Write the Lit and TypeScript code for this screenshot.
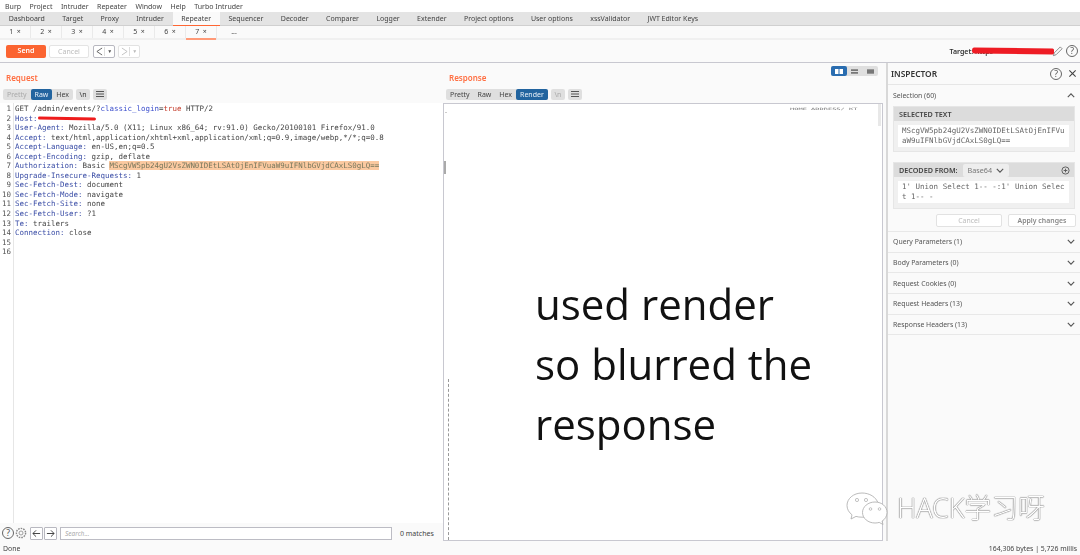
import { LitElement, html, css } from "lit";
import { customElement } from "lit/decorators.js";

const chevron = html`<svg class="chev" viewBox="0 0 10 6" width="8" height="5"><path d="M1 1l4 4 4-4" fill="none" stroke="#555" stroke-width="1.4"/></svg>`;
const chevUp = html`<svg class="chev" viewBox="0 0 10 6" width="8" height="5"><path d="M1 5l4-4 4 4" fill="none" stroke="#555" stroke-width="1.4"/></svg>`;
const hamb = html`<svg viewBox="0 0 8 6" width="8" height="6"><path d="M0 .5h8M0 3h8M0 5.5h8" stroke="#555" stroke-width="1"/></svg>`;
const qmark = (s: number) => html`<span class="q" style="width:${s}px;height:${s}px;font-size:${s * 0.72}px">?</span>`;
const navIcon = (d: string, c: string) => html`<svg viewBox="0 0 8 10" width="7" height="9"><path d=${d} fill="none" stroke=${c} stroke-width="1"/></svg>`;

const reqLines: any[] = [
  html`GET /admin/events/?<span class="p">classic_login</span>=<span class="v">true</span> HTTP/2`,
  html`<span class="h">Host:</span> <span class="redact-host"></span>`,
  html`<span class="h">User-Agent:</span> Mozilla/5.0 (X11; Linux x86_64; rv:91.0) Gecko/20100101 Firefox/91.0`,
  html`<span class="h">Accept:</span> text/html,application/xhtml+xml,application/xml;q=0.9,image/webp,*/*;q=0.8`,
  html`<span class="h">Accept-Language:</span> en-US,en;q=0.5`,
  html`<span class="h">Accept-Encoding:</span> gzip, deflate`,
  html`<span class="h">Authorization:</span> Basic <span class="sel">MScgVW5pb24gU2VsZWN0IDEtLSAtOjEnIFVuaW9uIFNlbGVjdCAxLS0gLQ==</span>`,
  html`<span class="h">Upgrade-Insecure-Requests:</span> 1`,
  html`<span class="h">Sec-Fetch-Dest:</span> document`,
  html`<span class="h">Sec-Fetch-Mode:</span> navigate`,
  html`<span class="h">Sec-Fetch-Site:</span> none`,
  html`<span class="h">Sec-Fetch-User:</span> ?1`,
  html`<span class="h">Te:</span> trailers`,
  html`<span class="h">Connection:</span> close`,
  html``,
  html``,
];

@customElement("app-root")
export class AppRoot extends LitElement {
  static styles = css`
    :host { display: block; width: 1080px; height: 555px; overflow: hidden; background: #fafafa; }
    * { box-sizing: border-box; }
    .app { width: 1080px; height: 555px; display: flex; flex-direction: column; position: relative; overflow: hidden;
      font-family: "Noto Sans", "Open Sans", sans-serif; font-size: 7px; color: #444; }
    .menu, .tabs, .subtabs, .toolbar, .req, .title, .btns, .layout, .insp, .status, .cut { filter: blur(0.45px); }
    .menu { height: 12px; background: #fff; display: flex; align-items: center; padding-left: 5px; gap: 8.5px; font-size: 7px; flex: none; }
    .tabs { height: 14px; background: #e4e4e4; border-bottom: 1px solid #d0d0d0; display: flex; flex: none; }
    .tabs span { padding: 0 8.7px; line-height: 13px; height: 14px; }
    .tabs span.on { background: #fafafa; box-shadow: inset 0 -1px 0 #ff6633; }
    .subtabs { height: 14px; background: #fafafa; display: flex; flex: none; border-bottom: 2px solid #f0f0f0; }
    .subtabs span { width: 31px; text-align: center; line-height: 12px; border-right: 1px solid #eaeaea; }
    .subtabs span.on { height: 14px; box-shadow: inset 0 -2px 0 #ff9a78; }
    .subtabs span.more { border: 0; width: 34px; }
    .toolbar { height: 23px; flex: none; display: flex; align-items: center; padding: 0 6px; background: #fafafa; border-bottom: 1px solid #c8c8d0; }
    .send { width: 40px; height: 13px; background: #fb6431; color: #fff; border-radius: 2px; text-align: center; line-height: 12px; font-weight: 600; }
    .cancel { width: 40px; height: 13px; margin-left: 3px; border: 1px solid #e4e4e4; border-radius: 2px; background: #fff; color: #bbb; text-align: center; line-height: 11px; }
    .nav { height: 13px; margin-left: 4px; width: 22px; border: 1px solid #b8b8c0; border-radius: 2px; background: #fff; display: flex; align-items: center; justify-content: space-around; padding: 0 1px; }
    .nav.off { border-color: #e2e2e2; margin-left: 3px; }
    .nav i { font-style: normal; font-size: 5px; line-height: 9px; height: 9px; color: #555; border-left: 1px solid #ddd; padding-left: 2px; }
    .nav.off i { color: #bbb; }
    .target { margin-left: auto; display: flex; align-items: center; gap: 3px; font-weight: 600; color: #333; position: relative; height: 14px; margin-right: -4px; }
    .target b { font-weight: 600; margin-right: 56px; }
    .red-t { position: absolute; left: 23px; top: 4px; width: 82px; height: 6px; background: #ee1c24; border-radius: 3px 2px 2px 3px / 4px 2px 2px 4px; transform: rotate(0.8deg); }
    .q { display: inline-flex; align-items: center; justify-content: center; border: 1px solid #666; border-radius: 50%; color: #555; font-weight: 400; flex: none; }
    .main { flex: 1; display: flex; min-height: 0; }
    .pane { display: flex; flex-direction: column; min-width: 0; }
    .req { width: 443px; position: relative; background: #fafafa; }
    .res { width: 443px; position: relative; }
    .title { height: 23px; flex: none; padding: 9px 0 0 6px; font-size: 8px; font-weight: 600; color: #ff6f42; line-height: 11px; }
    .btns { height: 17px; flex: none; display: flex; align-items: flex-start; padding: 2.5px 0 0 3px; gap: 3px; }
    .seg { display: flex; background: #dfdfdf; border-radius: 2px; height: 11px; }
    .seg span { padding: 0 4px; line-height: 11px; color: #444; height: 11px; }
    .seg span.dim { color: #aaa; }
    .seg span.on { background: #22649f; color: #e8f0f8; border-radius: 2px; }
    .chip { height: 11px; width: 14px; background: #dfdfdf; border-radius: 2px; display: flex; align-items: center; justify-content: center; color: #333; font-size: 7px; }
    .chip.dim { color: #aaa; }
    .editor { flex: none; height: 160px; display: flex; flex-direction: column; padding-top: 1px; font-family: "DejaVu Sans Mono", monospace; font-size: 7.47px; line-height: 9.55px; color: #444; overflow: hidden; }
    .edwrap { flex: 1; background: #fff; display: flex; flex-direction: column; min-height: 0; position: relative; }
    .edwrap::before { content: ""; position: absolute; left: 13px; top: 0; bottom: 0; width: 1px; background: #e6e6e6; }
    .ln { display: flex; white-space: pre; height: 9.55px; flex: none; }
    .ln em { width: 11px; text-align: right; margin-right: 4px; font-style: normal; color: #555; flex: none; }
    .h { color: #3a4da6; }
    .p { color: #3a4dcc; }
    .v { color: #c43d2c; }
    .sel { background: #fbc9a0; color: #77775c; }
    .redact-host { display: inline-block; width: 58px; height: 3px; background: #ee1c1c; border-radius: 2px; vertical-align: 1px; transform: translateX(-4px) rotate(0.8deg); }
    .search { height: 18px; flex: none; display: flex; align-items: center; padding: 2px 0 0 2px; background: #fafafa; gap: 1px; }
    .gear { width: 12px; height: 12px; flex: none; }
    .arrow { width: 13px; height: 13px; border: 1px solid #b8b8c0; background: #fff; border-radius: 1px; display: flex; align-items: center; justify-content: center; flex: none; }
    .gear + .arrow { margin-left: 2px; }
    .input { width: 332px; height: 13px; margin-left: 2px; border: 1px solid #bcbcc4; background: #fff; color: #aaa; font-style: italic; font-size: 6.5px; line-height: 11px; padding-left: 4px; }
    .matches { margin-left: 7px; color: #444; }
    .render { flex: 1; min-height: 0; border: 1px solid #c8c8d0; margin-right: 3px; background: #fff; position: relative; padding: 170px 0 0 91px;
      font-family: "Open Sans", "Noto Sans", sans-serif; font-size: 42px; line-height: 60px; color: #111; overflow: hidden; white-space: nowrap; }
    .cut { position: absolute; left: 346px; top: 3px; transform: scaleY(0.45); transform-origin: top left; font-family: "DejaVu Sans Mono", monospace; font-size: 7px; line-height: 8px; color: #777; }
    .sb { position: absolute; right: 1px; top: 0; width: 3px; height: 22px; background: #e8e8e8; }
    .dots { position: absolute; left: 4px; top: 275px; bottom: 0; border-left: 1px dashed #999; }
    .tick { position: absolute; left: 1px; top: 8px; width: 2px; height: 1px; background: #ccc; }
    .grip { position: absolute; left: -1px; top: 57px; width: 3px; height: 13px; background: #aaa; }
    .patch { position: absolute; left: -1px; top: 147px; width: 3px; height: 128px; background: #fff; }
    .layout { position: absolute; right: 8px; top: 3px; display: flex; background: #dfdfdf; border-radius: 2px; height: 10px; }
    .layout span { width: 15.7px; display: flex; align-items: center; justify-content: center; }
    .layout span.on { background: #2a6db0; border-radius: 2px; }
    .insp { flex: 1; min-width: 0; border-left: 2px solid #d8d8d8; display: flex; flex-direction: column; background: #fafafa; }
    .insp-h { height: 22px; display: flex; align-items: center; padding: 0 3px; border-bottom: 1px solid #e6e6e6; font-weight: 600; font-size: 8.4px; color: #333; flex: none; gap: 6px; }
    .insp-h .t { flex: 1; }
    .row { height: 20.7px; flex: none; display: flex; align-items: center; justify-content: space-between; padding: 0 5px; border-bottom: 1px solid #e8e8e8; color: #555; font-size: 6.9px; }
    .row.first { border: 0; height: 21px; }
    .card { margin: 0 5px; background: #f0f0f0; border: 1px solid #e6e6e6; flex: none; }
    .card-h { height: 14px; background: #dcdcdc; font-weight: 600; color: #444; font-size: 7.2px; padding-left: 5px; display: flex; align-items: center; }
    .card-b { margin: 4px 5px 0 4px; background: #fff; padding: 1px 4px; height: 22px; font-family: "DejaVu Sans Mono", monospace; font-size: 7.5px; line-height: 10px; color: #666; white-space: pre; }
    .c1 { height: 46px; }
    .c2 { height: 47px; margin-top: 10px; }
    .dec { justify-content: flex-start; gap: 5px; padding-right: 4px; }
    .dec .drop { background: #eee; border-radius: 2px; padding: 0 5px; height: 13px; font-weight: 400; color: #777; display: inline-flex; align-items: center; gap: 4px; }
    .plus { margin-left: auto; display: flex; }
    .actions { display: flex; justify-content: flex-end; gap: 6px; padding: 5px 4px 0 0; height: 23px; border-bottom: 1px solid #e8e8e8; flex: none; }
    .actions span { height: 13px; border: 1px solid #e2e2e2; border-radius: 2px; background: #fff; text-align: center; line-height: 11px; font-size: 6.9px; }
    .actions .a { width: 66px; color: #bbb; }
    .actions .b { width: 68px; color: #888; font-weight: 600; }
    .status { height: 14px; flex: none; display: flex; align-items: center; justify-content: space-between; padding: 0 3px; font-size: 6.9px; color: #444; background: #fafafa; }
    .wm { position: absolute; left: 845px; top: 490px; display: flex; align-items: center; gap: 8px; }
    .wm span { font-family: "Noto Sans", "Noto Sans CJK SC", sans-serif; font-size: 27px; line-height: 36px; font-weight: 300; color: #fff; letter-spacing: -0.2px;
      text-shadow: 0 0 1px #555, 0 0 1px #555; }
  `;

  render() {
    return html`<div class="app">
      <div class="menu">${["Burp", "Project", "Intruder", "Repeater", "Window", "Help", "Turbo Intruder"].map((m) => html`<span>${m}</span>`)}</div>
      <div class="tabs">
        ${["Dashboard", "Target", "Proxy", "Intruder", "Repeater", "Sequencer", "Decoder", "Comparer", "Logger", "Extender", "Project options", "User options", "xssValidator", "JWT Editor Keys"].map(
          (t) => html`<span class=${t === "Repeater" ? "on" : ""}>${t}</span>`
        )}
      </div>
      <div class="subtabs">
        ${[1, 2, 3, 4, 5, 6, 7].map((n) => html`<span class=${n === 7 ? "on" : ""}>${n} &nbsp;×</span>`)}
        <span class="more">...</span>
      </div>
      <div class="toolbar">
        <div class="send">Send</div>
        <div class="cancel">Cancel</div>
        <div class="nav">${navIcon("M7 1L1 5l6 4", "#555")}<i>▼</i></div>
        <div class="nav off">${navIcon("M1 1l6 4-6 4", "#bbb")}<i>▼</i></div>
        <div class="target">
          <b>Target: https</b><span class="red-t"></span>
          <svg viewBox="0 0 12 12" width="11" height="11"><path d="M1.5 10.500l1-3 6.500-6.500 2 2-6.500 6.500z" fill="none" stroke="#777" stroke-width="0.9"/></svg>
          ${qmark(12)}
        </div>
      </div>
      <div class="main">
        <div class="pane req">
          <div class="title">Request</div>
          <div class="btns">
            <div class="seg"><span class="dim">Pretty</span><span class="on">Raw</span><span>Hex</span></div>
            <div class="chip">\\n</div>
            <div class="chip">${hamb}</div>
          </div>
          <div class="edwrap">
            <div class="editor">
              ${reqLines.map((l, i) => html`<div class="ln"><em>${i + 1}</em><span>${l}</span></div>`)}
            </div>
          </div>
          <div class="search">
            ${qmark(12)}
            <svg class="gear" viewBox="0 0 12 12"><circle cx="6" cy="6" r="4.600" fill="none" stroke="#888" stroke-width="1.400" stroke-dasharray="1.600 1"/><circle cx="6" cy="6" r="2" fill="none" stroke="#888" stroke-width="0.800"/></svg>
            <div class="arrow"><svg viewBox="0 0 10 10" width="9" height="9"><path d="M9 5H1M4.500 1.500L1 5l3.500 3.500" fill="none" stroke="#333" stroke-width="1"/></svg></div>
            <div class="arrow"><svg viewBox="0 0 10 10" width="9" height="9"><path d="M1 5h8M5.500 1.500L9 5 5.500 8.500" fill="none" stroke="#333" stroke-width="1"/></svg></div>
            <div class="input">Search...</div>
            <span class="matches">0 matches</span>
          </div>
        </div>
        <div class="pane res">
          <div class="title">Response</div>
          <div class="layout">
            <span class="on"><svg viewBox="0 0 8 5" width="8" height="5"><path d="M0 0h3.500v5H0zM4.500 0H8v5H4.500z" fill="#fff"/></svg></span>
            <span><svg viewBox="0 0 8 5" width="7" height="5"><path d="M0 0h8v2H0zM0 3h8v2H0z" fill="#777"/></svg></span>
            <span><svg viewBox="0 0 8 5" width="7" height="5"><path d="M0 0h8v5H0z" fill="#777"/></svg></span>
          </div>
          <div class="btns">
            <div class="seg"><span>Pretty</span><span>Raw</span><span>Hex</span><span class="on">Render</span></div>
            <div class="chip dim">\\n</div>
            <div class="chip">${hamb}</div>
          </div>
          <div class="render">
            <div class="cut">HOME ADDRESS/ KT</div>
            <div class="sb"></div>
            <div class="tick"></div>
            <div class="grip"></div>
            <div class="patch"></div>
            <div class="dots"></div>
            used render<br />so blurred the<br />response
          </div>
        </div>
        <div class="insp">
          <div class="insp-h"><span class="t">INSPECTOR</span>${qmark(12)}
            <svg viewBox="0 0 10 10" width="9" height="9"><path d="M1.500 1.500l7 7M8.500 1.500l-7 7" stroke="#444" stroke-width="1.200"/></svg></div>
          <div class="row first"><span>Selection (60)</span>${chevUp}</div>
          <div class="card c1">
            <div class="card-h">SELECTED TEXT</div>
            <div class="card-b">MScgVW5pb24gU2VsZWN0IDEtLSAtOjEnIFVu
aW9uIFNlbGVjdCAxLS0gLQ==</div>
          </div>
          <div class="card c2">
            <div class="card-h dec">DECODED FROM: <span class="drop">Base64 ${chevron}</span>
              <span class="plus"><svg viewBox="0 0 10 10" width="9" height="9"><circle cx="5" cy="5" r="4" fill="none" stroke="#555"/><path d="M3 5h4M5 3v4" stroke="#555"/></svg></span></div>
            <div class="card-b">1' Union Select 1-- -:1' Union Selec
t 1-- -</div>
          </div>
          <div class="actions"><span class="a">Cancel</span><span class="b">Apply changes</span></div>
          ${["Query Parameters (1)", "Body Parameters (0)", "Request Cookies (0)", "Request Headers (13)", "Response Headers (13)"].map(
            (r) => html`<div class="row"><span>${r}</span>${chevron}</div>`
          )}
        </div>
      </div>
      <div class="status"><span>Done</span><span>164,306 bytes | 5,726 millis</span></div>
      <div class="wm">
        <svg viewBox="0 0 44 34" width="44" height="34">
          <path d="M17 2C8.500 2 2 7.600 2 14.500c0 3.800 2 7 5 9.300L6 28l5-2.600c1.800.5 3.600.8 6 .8 1 0 2-.1 3-.2C32 25 33 13 33 12 31 6 24.500 2 17 2z" fill="#fff" stroke="#aaa" stroke-width="0.800"/>
          <path d="M30 11c-7 0-12.500 4.700-12.500 10.500S23 32 30 32c1.600 0 2.900-.2 4.200-.6L38 33.500l-1-3.300c3-1.900 5-5 5-8.700C42 15.700 37 11 30 11z" fill="#fff" stroke="#aaa" stroke-width="0.800"/>
          <circle cx="12" cy="9" r="1.600" fill="none" stroke="#aaa" stroke-width="0.700"/><circle cx="21" cy="9" r="1.600" fill="none" stroke="#aaa" stroke-width="0.700"/>
          <circle cx="25.500" cy="18" r="1.300" fill="none" stroke="#aaa" stroke-width="0.700"/><circle cx="34.500" cy="18" r="1.300" fill="none" stroke="#aaa" stroke-width="0.700"/>
        </svg>
        <span>HACK学习呀</span>
      </div>
    </div>`;
  }
}
